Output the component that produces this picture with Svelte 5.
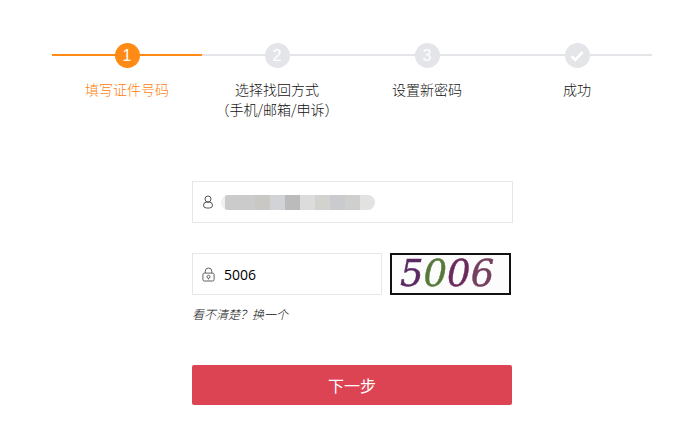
<script>
  const steps = [
    { mark: '1', label: '填写证件号码', active: true },
    { mark: '2', label: '选择找回方式', sub: '（手机/邮箱/申诉）' },
    { mark: '3', label: '设置新密码' },
    { mark: 'check', label: '成功' }
  ];

  // pixelated account name
  const blocks = ['#cbcbcb', '#cbcbcb', '#c9c8c4', '#d2d3d6', '#bbbbbb', '#dcdcdc', '#d2d2cf', '#cacbce', '#cfcfcd', '#e2e2e2'];
  const digits = [
    { d: '5', c: '#5a2a62' },
    { d: '0', c: '#56793a' },
    { d: '0', c: '#6b2a5c' },
    { d: '6', c: '#74405f' }
  ];
</script>

<div class="page">
  <ul class="steps">
    {#each steps as step}
      <li class="step" class:active={step.active}>
        <span class="mark">
          {#if step.mark === 'check'}
            <svg width="14" height="12" viewBox="0 0 14 12"><path d="M1.5 6.2 5.3 9.8 12.5 2.2" fill="none" stroke="#fff" stroke-width="2.6"/></svg>
          {:else}
            {step.mark}
          {/if}
        </span>
        <p class="label">{step.label}{#if step.sub}<br /><span class="sub">{step.sub}</span>{/if}</p>
      </li>
    {/each}
  </ul>

  <form class="form">
    <div class="field wide">
      <svg class="icon" width="12" height="14" viewBox="0 0 12 14" fill="none" stroke="#555" stroke-width="1">
        <circle cx="6" cy="4" r="3" />
        <rect x="1.5" y="7.2" width="9" height="5.8" rx="2.9" />
      </svg>
      <span class="masked">
        {#each blocks as color}
          <i style="background: {color}"></i>
        {/each}
      </span>
    </div>

    <div class="captcha-row">
      <div class="field short">
        <svg class="icon" width="13" height="15" viewBox="0 0 14 15" fill="none" stroke="#555" stroke-width="1">
          <path d="M3.5 6V4a3.5 3.5 0 0 1 7 0v2" />
          <rect x="1" y="6" width="12" height="8.5" rx="1.5" />
          <circle cx="7" cy="10" r="1.6" />
          <path d="M7 11.6v1.2" />
        </svg>
        <span class="value">5006</span>
      </div>
      <div class="captcha">
        {#each digits as n}
          <span style="color: {n.c}">{n.d}</span>
        {/each}
      </div>
    </div>
    <p class="hint">看不清楚？换一个</p>

    <button type="button" class="next">下一步</button>
  </form>
</div>

<style>
  :global(body) {
    margin: 0;
    background: #fff;
    font-family: "Noto Sans CJK SC", "Liberation Sans", sans-serif;
  }

  .page {
    width: 698px;
    height: 442px;
    overflow: hidden;
    padding-top: 43px;
    box-sizing: border-box;
  }

  .steps {
    display: grid;
    grid-template-columns: repeat(4, 150px);
    margin: 0 0 0 52px;
    padding: 0;
    list-style: none;
  }

  .step {
    position: relative;
    display: flex;
    flex-direction: column;
    align-items: center;
    height: 96px;
  }

  .step::before {
    content: '';
    position: absolute;
    left: 0;
    right: 0;
    top: 11px;
    height: 2px;
    background: #e4e5e8;
  }

  .step.active::before {
    background: #ff8a15;
  }

  .mark {
    position: relative;
    display: flex;
    align-items: center;
    justify-content: center;
    width: 25px;
    height: 25px;
    border-radius: 50%;
    background: #e4e5e8;
    color: #fff;
    font-family: "Liberation Sans", sans-serif;
    font-size: 16px;
  }

  .active .mark {
    background: #ff8a15;
  }

  .label {
    margin: 11px 0 0;
    font-size: 14px;
    line-height: 20px;
    font-weight: 300;
    color: #111;
    text-align: center;
  }

  .active .label {
    color: #ff8010;
  }

  .form {
    display: flex;
    flex-direction: column;
    align-items: flex-start;
    margin: 42px 0 0 192px;
  }

  .field {
    display: flex;
    align-items: center;
    box-sizing: border-box;
    height: 42px;
    border: 1px solid #e6e6e6;
  }

  .wide {
    width: 321px;
    padding-left: 9px;
  }

  .short {
    width: 190px;
    padding-left: 9px;
  }

  .icon {
    flex: none;
  }

  .masked {
    display: flex;
    height: 15px;
    margin-left: 7px;
    padding-left: 4px;
    background: #f0f0f0;
    border-radius: 8px;
    overflow: hidden;
    filter: blur(0.3px);
  }

  .masked i {
    width: 15px;
    height: 15px;
  }

  .captcha-row {
    display: flex;
    gap: 8px;
    margin-top: 30px;
  }

  .value {
    margin-left: 9px;
    font-family: "Open Sans", "Liberation Sans", sans-serif;
    font-size: 14px;
    color: #000;
  }

  .captcha {
    display: flex;
    align-items: center;
    justify-content: flex-start;
    box-sizing: border-box;
    width: 121px;
    height: 42px;
    padding: 0 0 2px 8px;
    border: 2px solid #111;
    background: #fdfcfd;
    font-family: "DejaVu Serif", serif;
    font-style: italic;
    font-size: 37px;
    line-height: 1;
    -webkit-text-stroke: 0.4px currentColor;
  }

  .captcha span {
    filter: blur(0.4px);
  }

  .hint {
    margin: 10px 0 0;
    font-size: 12px;
    line-height: 18px;
    font-weight: 300;
    font-style: italic;
    color: #111;
  }

  .next {
    width: 320px;
    height: 40px;
    margin-top: 42px;
    border: 0;
    border-radius: 2px;
    background: #dc4453;
    color: #fff;
    font-family: inherit;
    font-size: 16px;
  }
</style>
